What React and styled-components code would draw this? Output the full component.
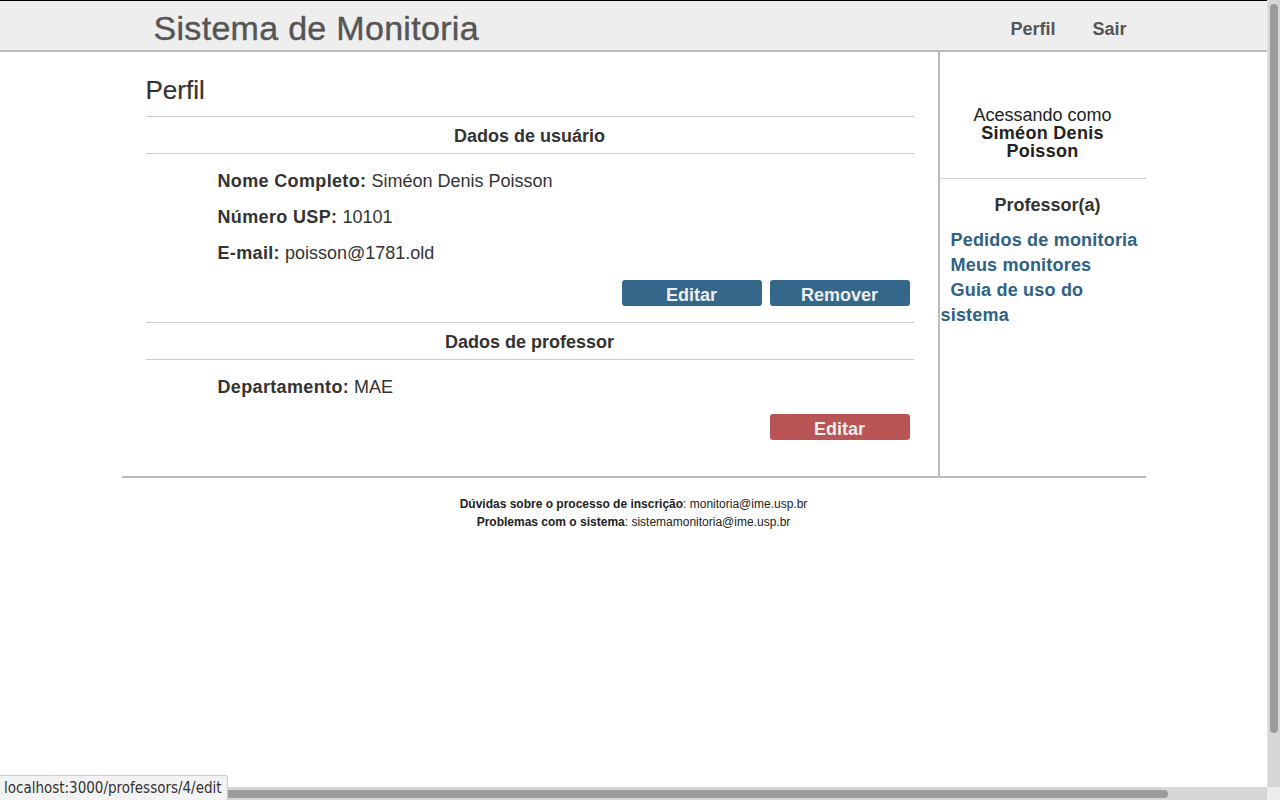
import React from "react";
import styled, { createGlobalStyle } from "styled-components";

const Global = createGlobalStyle`
  html, body { margin: 0; padding: 0; background: #fff; overflow: hidden; }
  body { font-family: "Liberation Sans", Arial, sans-serif; color: #333; }
  * { box-sizing: border-box; }
`;

const Page = styled.div`
  width: 1267px;
  height: 800px;
`;

const Header = styled.header`
  height: 52px;
  background: #eee;
  border-top: 1px solid #000;
  border-bottom: 2px solid #bbb;
`;

const HeaderInner = styled.div`
  width: 1024px;
  height: 100%;
  margin: 0 auto;
  padding: 0 19px 0 32px;
  display: flex;
  align-items: center;
  justify-content: space-between;
`;

const Brand = styled.a`
  font-size: 34px;
  color: #555;
  text-decoration: none;
  letter-spacing: 0.3px;
  -webkit-text-stroke: 0.4px #555;
  margin-top: 6px;
`;

const Nav = styled.nav`
  display: flex;
  gap: 37px;
  margin-top: 8px;
`;

const NavLink = styled.a`
  font-size: 18px;
  font-weight: bold;
  color: #555;
  text-decoration: none;
`;

const Container = styled.div`
  width: 1024px;
  margin: 0 auto;
  display: flex;
  border-bottom: 2px solid #bbb;
`;

const Main = styled.main`
  width: 818px;
  padding: 24px 24px 36px 24px;
  border-right: 2px solid #bbb;
`;

const Title = styled.h2`
  margin: 0 0 12px;
  font-size: 26px;
  line-height: 28px;
  font-weight: normal;
  color: #333;
  -webkit-text-stroke: 0.2px #333;
`;

const Rule = styled.hr`
  margin: 0;
  border: 0;
  border-top: 1px solid #ccc;
`;

const SectionTitle = styled.h3`
  margin: 0;
  padding-top: 3px;
  font-size: 18px;
  line-height: 33px;
  font-weight: bold;
  text-align: center;
  color: #333;
`;

const Fields = styled.div`
  padding: 9px 0 1px 72px;
`;

const Field = styled.p`
  margin: 0;
  font-size: 18px;
  line-height: 36px;
  color: #333;
  b { font-weight: bold; letter-spacing: 0.35px; }
`;

const Actions = styled.div`
  display: flex;
  justify-content: flex-end;
  gap: 8px;
  padding: 8px 4px ${(p) => (p.$last ? "0" : "16px")} 0;
`;

const Button = styled.button`
  width: 140px;
  height: 26px;
  border: 0;
  border-radius: 3px;
  background: ${(p) => (p.$danger ? "#b85454" : "#346789")};
  color: #eee;
  font-family: "Liberation Sans", Arial, sans-serif;
  font-size: 18px;
  font-weight: bold;
  line-height: 26px;
  padding: 2px 0 0;
  cursor: pointer;
`;

const Side = styled.aside`
  width: 206px;
  padding-top: 54px;
`;

const Who = styled.div`
  text-align: center;
  font-size: 18px;
  line-height: 18px;
  color: #222;
  padding: 0 20px;
  b { display: block; font-weight: bold; letter-spacing: 0.3px; }
`;

const SideRule = styled.hr`
  margin: 18px 0 0 1px;
  border: 0;
  border-top: 1px solid #ccc;
`;

const Role = styled.h4`
  margin: 14px 0 11px;
  padding-left: 10px;
  font-size: 18px;
  line-height: 24px;
  font-weight: bold;
  text-align: center;
  color: #333;
`;

const Links = styled.div`
  padding-left: 1px;
`;

const SideLink = styled.a`
  display: block;
  text-indent: 10px;
  font-size: 18px;
  line-height: 25px;
  font-weight: bold;
  letter-spacing: 0.2px;
  color: #2e6186;
  text-decoration: none;
`;

const Footer = styled.footer`
  padding-top: 17px;
  text-align: center;
  font-size: 12px;
  line-height: 18px;
  color: #222;
  b { font-weight: bold; }
`;

const StatusBubble = styled.div`
  position: fixed;
  left: 0;
  bottom: 0;
  height: 25px;
  padding: 0 5px 0 4px;
  background: #f2f2f2;
  border: 1px solid #ccc;
  border-left: 0;
  border-bottom: 0;
  border-top-right-radius: 3px;
  font-family: "DejaVu Sans Condensed", "DejaVu Sans", sans-serif;
  font-stretch: condensed;
  font-size: 15px;
  line-height: 25px;
  color: #333;
  z-index: 3;
`;

const VScroll = styled.div`
  position: fixed;
  top: 0;
  right: 0;
  width: 13px;
  height: 787px;
  background: #d6d6d6;
  border-left: 1px solid #e4e4e4;
  z-index: 2;
`;

const VThumb = styled.div`
  position: absolute;
  top: 4px;
  left: 2px;
  width: 8px;
  height: 729px;
  border-radius: 4px;
  background: #9b9b9b;
`;

const HScroll = styled.div`
  position: fixed;
  left: 0;
  bottom: 0;
  width: 1267px;
  height: 13px;
  background: #d6d6d6;
  z-index: 2;
`;

const HThumb = styled.div`
  position: absolute;
  left: 4px;
  top: 3px;
  width: 1164px;
  height: 8px;
  border-radius: 4px;
  background: #9b9b9b;
`;

const Corner = styled.div`
  position: fixed;
  right: 0;
  bottom: 0;
  width: 13px;
  height: 13px;
  background: #ececec;
  z-index: 2;
`;

export default function App() {
  return (
    <Page>
      <Global />
      <Header>
        <HeaderInner>
          <Brand>Sistema de Monitoria</Brand>
          <Nav>
            <NavLink>Perfil</NavLink>
            <NavLink>Sair</NavLink>
          </Nav>
        </HeaderInner>
      </Header>
      <Container>
        <Main>
          <Title>Perfil</Title>
          <Rule />
          <SectionTitle>Dados de usuário</SectionTitle>
          <Rule />
          <Fields>
            <Field><b>Nome Completo:</b> Siméon Denis Poisson</Field>
            <Field><b>Número USP:</b> 10101</Field>
            <Field><b>E-mail:</b> poisson@1781.old</Field>
          </Fields>
          <Actions>
            <Button>Editar</Button>
            <Button>Remover</Button>
          </Actions>
          <Rule />
          <SectionTitle>Dados de professor</SectionTitle>
          <Rule />
          <Fields>
            <Field><b>Departamento:</b> MAE</Field>
          </Fields>
          <Actions $last>
            <Button $danger>Editar</Button>
          </Actions>
        </Main>
        <Side>
          <Who>
            Acessando como
            <b>Siméon Denis Poisson</b>
          </Who>
          <SideRule />
          <Role>Professor(a)</Role>
          <Links>
            <SideLink>Pedidos de monitoria</SideLink>
            <SideLink>Meus monitores</SideLink>
            <SideLink>Guia de uso do sistema</SideLink>
          </Links>
        </Side>
      </Container>
      <Footer>
        <div><b>Dúvidas sobre o processo de inscrição</b>: monitoria@ime.usp.br</div>
        <div><b>Problemas com o sistema</b>: sistemamonitoria@ime.usp.br</div>
      </Footer>
      <VScroll><VThumb /></VScroll>
      <HScroll><HThumb /></HScroll>
      <Corner />
      <StatusBubble>localhost:3000/professors/4/edit</StatusBubble>
    </Page>
  );
}
